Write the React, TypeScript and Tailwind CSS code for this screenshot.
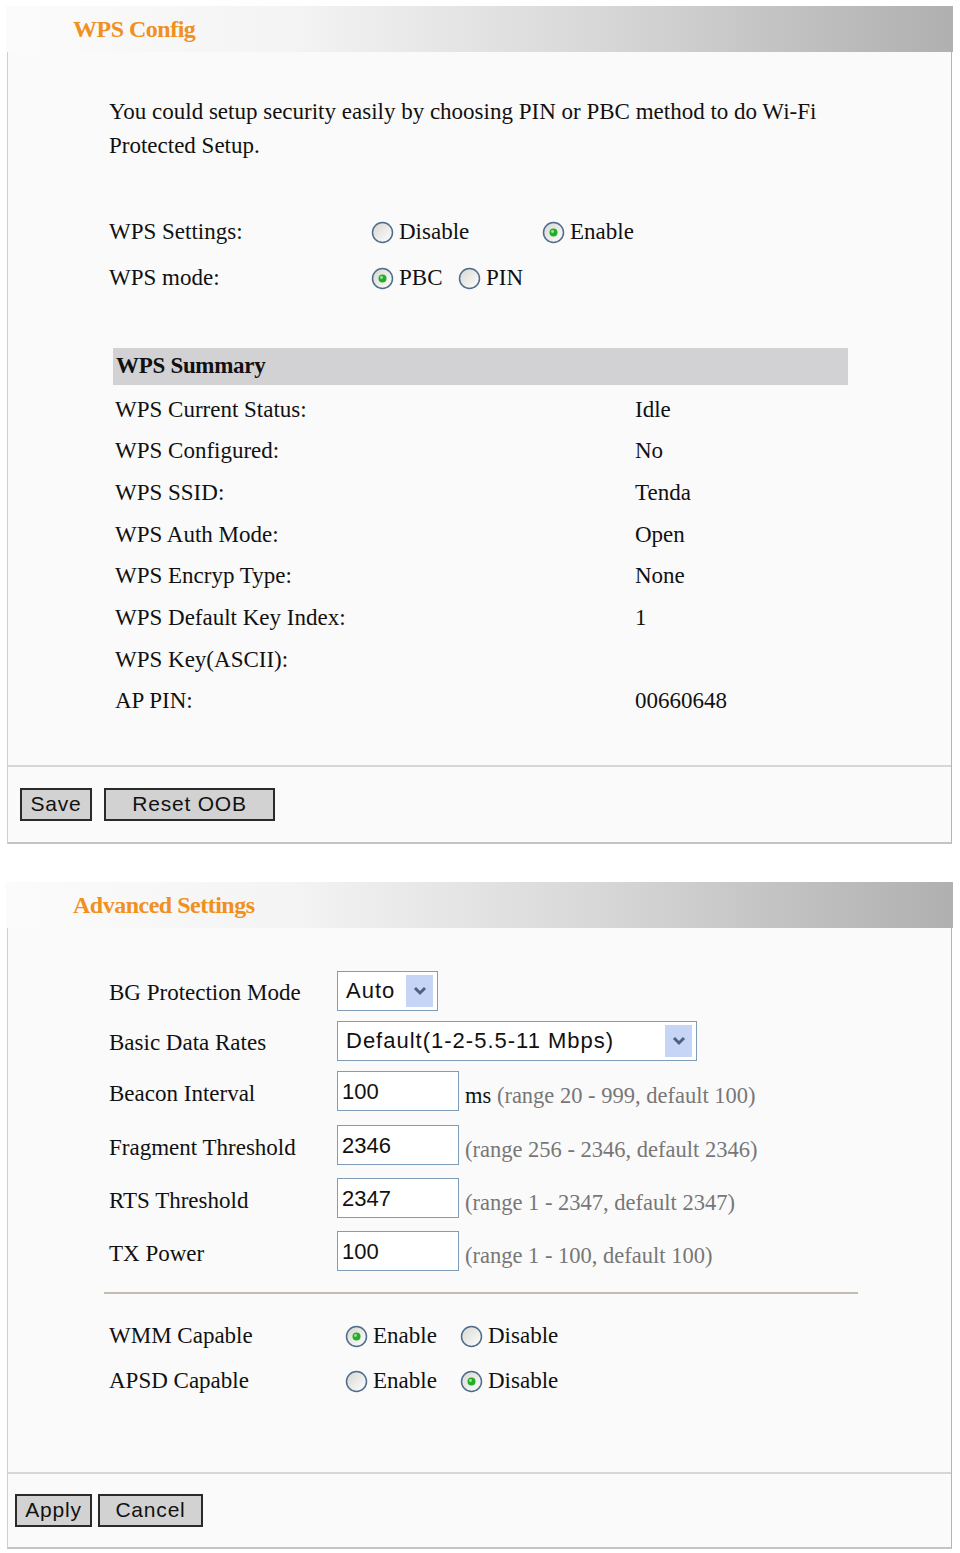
import React from "react";

const serif = "font-['Liberation_Serif','Times_New_Roman',serif]";
const sans = "font-['Liberation_Sans',Arial,sans-serif]";

function Radio({ checked }: { checked?: boolean }) {
  return (
    <svg width="23" height="23" viewBox="0 0 23 23" className="shrink-0">
      <defs>
        <linearGradient id="rg" x1="0" y1="0" x2="1" y2="1">
          <stop offset="0" stopColor="#d6d6d0" />
          <stop offset="1" stopColor="#ffffff" />
        </linearGradient>
      </defs>
      <circle cx="11.5" cy="11.5" r="10" fill="url(#rg)" stroke="#4f6d8c" strokeWidth="1.5" />
      {checked && <circle cx="11.5" cy="11.5" r="4" fill="#26ad26" />}
      {checked && <circle cx="10.5" cy="10.5" r="1.4" fill="#9be59b" />}
    </svg>
  );
}

function Option({ checked, label, w }: { checked?: boolean; label: string; w: string }) {
  return (
    <div className={`flex items-center gap-[5px] ${w}`}>
      <Radio checked={checked} />
      <span>{label}</span>
    </div>
  );
}

function PanelHeader({ title }: { title: string }) {
  return (
    <div className="flex h-[46px] items-center bg-[linear-gradient(to_right,#fbfbfb_0%,#f4f4f4_30%,#d8d8d8_62%,#bcbcbc_88%,#b0b0b0_100%)] pl-[67px]">
      <span className={`${serif} text-[24px] font-bold tracking-[-0.5px] text-[#f0901f]`}>{title}</span>
    </div>
  );
}

function Btn({ label, w }: { label: string; w: string }) {
  return (
    <div className={`${sans} flex h-[33px] items-center justify-center border-2 border-[#2a2a2a] bg-[#d2d2d2] text-[21px] tracking-[0.8px] text-[#111] ${w}`}>
      {label}
    </div>
  );
}

function Select({ value, w }: { value: string; w: string }) {
  return (
    <div className={`${sans} flex h-[40px] items-center justify-between border border-[#7f9db9] bg-white pl-[8px] pr-[4px] text-[22px] tracking-[1px] text-[#111] ${w}`}>
      <span>{value}</span>
      <div className="flex h-[32px] w-[27px] items-center justify-center bg-[#c6d4f6]">
        <svg width="14" height="10" viewBox="0 0 14 10">
          <path d="M2 2 L7 7 L12 2" fill="none" stroke="#4d6185" strokeWidth="3" />
        </svg>
      </div>
    </div>
  );
}

function Field({ value, note, pre }: { value: string; note: string; pre?: string }) {
  return (
    <div className="flex items-center">
      <div className={`${sans} flex h-[40px] w-[122px] items-center border border-[#7f9db9] bg-white pl-[4px] text-[22px] text-[#111]`}>
        {value}
      </div>
      <span className="ml-[6px] mt-[8px] text-[22.5px] text-[#777]">
        {pre && <span className="text-[#111]">{pre} </span>}
        {note}
      </span>
    </div>
  );
}

const summary: [string, string][] = [
  ["WPS Current Status:", "Idle"],
  ["WPS Configured:", "No"],
  ["WPS SSID:", "Tenda"],
  ["WPS Auth Mode:", "Open"],
  ["WPS Encryp Type:", "None"],
  ["WPS Default Key Index:", "1"],
  ["WPS Key(ASCII):", ""],
  ["AP PIN:", "00660648"],
];

export default function App() {
  return (
    <div className={`${serif} min-h-[1553px] bg-white pt-[6px] text-[23px] text-[#111]`}>
      {/* WPS Config */}
      <div className="ml-[6px] w-[947px]">
        <PanelHeader title="WPS Config" />
        <div className="ml-[1px] w-[945px] border-x border-b-2 border-l-[#cfcfcf] border-r-[#b5b5b5] border-b-[#c4c4c4] bg-[#fafafa]">
          <div className="pl-[101px] pr-[20px] pt-[43px]">
            <p className="leading-[34px]">
              You could setup security easily by choosing PIN or PBC method to do Wi-Fi
              <br />
              Protected Setup.
            </p>
            <div className="mt-[46px] flex h-[46px] items-center">
              <span className="w-[262px]">WPS Settings:</span>
              <Option label="Disable" w="w-[171px]" />
              <Option checked label="Enable" w="" />
            </div>
            <div className="flex h-[46px] items-center">
              <span className="w-[262px]">WPS mode:</span>
              <Option checked label="PBC" w="w-[87px]" />
              <Option label="PIN" w="" />
            </div>
          </div>
          <div className="ml-[105px] mt-[47px] w-[735px]">
            <div className="flex h-[37px] items-center bg-[#d2d2d5] pl-[3px] font-bold tracking-[-0.3px]">WPS Summary</div>
            <div className="pt-[4px]">
              {summary.map(([k, v]) => (
                <div key={k} className="flex h-[41.7px] items-center pl-[2px]">
                  <span className="w-[520px]">{k}</span>
                  <span>{v}</span>
                </div>
              ))}
            </div>
          </div>
          <div className="mt-[42px] border-t-2 border-[#d6d6d6] pb-[21px] pl-[12px] pt-[21px]">
            <div className="flex gap-[12px]">
              <Btn label="Save" w="w-[72px]" />
              <Btn label="Reset OOB" w="w-[171px]" />
            </div>
          </div>
        </div>
      </div>

      {/* Advanced Settings */}
      <div className="ml-[6px] mt-[38px] w-[947px]">
        <PanelHeader title="Advanced Settings" />
        <div className="ml-[1px] w-[945px] border-x border-b-2 border-l-[#cfcfcf] border-r-[#b5b5b5] border-b-[#c4c4c4] bg-[#fafafa]">
          <div className="pl-[101px] pt-[43px]">
            <div className="flex h-[50px] items-start">
              <span className="mt-[5px] w-[228px]">BG Protection Mode</span>
              <Select value="Auto" w="w-[101px]" />
            </div>
            <div className="flex h-[50px] items-start">
              <span className="mt-[5px] w-[228px]">Basic Data Rates</span>
              <Select value="Default(1-2-5.5-11 Mbps)" w="w-[360px]" />
            </div>
            <div className="flex h-[54px] items-start">
              <span className="mt-[6px] w-[228px]">Beacon Interval</span>
              <Field value="100" pre="ms" note="(range 20 - 999, default 100)" />
            </div>
            <div className="flex h-[53px] items-start">
              <span className="mt-[6px] w-[228px]">Fragment Threshold</span>
              <Field value="2346" note="(range 256 - 2346, default 2346)" />
            </div>
            <div className="flex h-[53px] items-start">
              <span className="mt-[6px] w-[228px]">RTS Threshold</span>
              <Field value="2347" note="(range 1 - 2347, default 2347)" />
            </div>
            <div className="flex h-[53px] items-start">
              <span className="mt-[6px] w-[228px]">TX Power</span>
              <Field value="100" note="(range 1 - 100, default 100)" />
            </div>
          </div>
          <div className="ml-[96px] mt-[8px] h-[2px] w-[754px] bg-[#c2bbb0]" />
          <div className="pl-[101px] pt-[20px]">
            <div className="flex h-[45px] items-center">
              <span className="w-[236px]">WMM Capable</span>
              <Option checked label="Enable" w="w-[115px]" />
              <Option label="Disable" w="" />
            </div>
            <div className="flex h-[45px] items-center">
              <span className="w-[236px]">APSD Capable</span>
              <Option label="Enable" w="w-[115px]" />
              <Option checked label="Disable" w="" />
            </div>
          </div>
          <div className="mt-[68px] border-t-2 border-[#d6d6d6] pb-[20px] pl-[7px] pt-[20px]">
            <div className="flex gap-[6px]">
              <Btn label="Apply" w="w-[77px]" />
              <Btn label="Cancel" w="w-[105px]" />
            </div>
          </div>
        </div>
      </div>
    </div>
  );
}
